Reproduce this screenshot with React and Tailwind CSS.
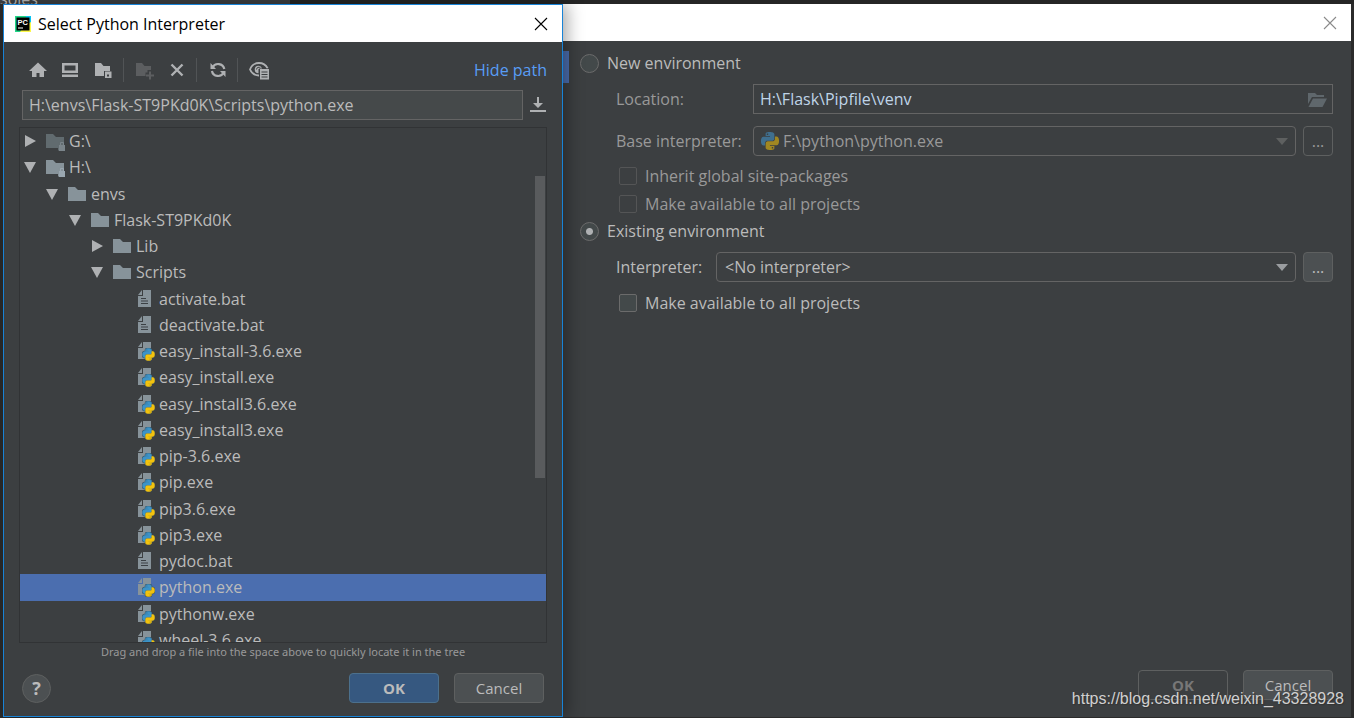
import { useState } from "react";

const files = [
  { name: "G:\\", depth: 0, type: "drive", state: "closed", dim: true },
  { name: "H:\\", depth: 0, type: "drive", state: "open" },
  { name: "envs", depth: 1, type: "folder", state: "open" },
  { name: "Flask-ST9PKd0K", depth: 2, type: "folder", state: "open" },
  { name: "Lib", depth: 3, type: "folder", state: "closed" },
  { name: "Scripts", depth: 3, type: "folder", state: "open" },
  { name: "activate.bat", depth: 4, type: "file" },
  { name: "deactivate.bat", depth: 4, type: "file" },
  { name: "easy_install-3.6.exe", depth: 4, type: "python" },
  { name: "easy_install.exe", depth: 4, type: "python" },
  { name: "easy_install3.6.exe", depth: 4, type: "python" },
  { name: "easy_install3.exe", depth: 4, type: "python" },
  { name: "pip-3.6.exe", depth: 4, type: "python" },
  { name: "pip.exe", depth: 4, type: "python" },
  { name: "pip3.6.exe", depth: 4, type: "python" },
  { name: "pip3.exe", depth: 4, type: "python" },
  { name: "pydoc.bat", depth: 4, type: "file" },
  { name: "python.exe", depth: 4, type: "python" },
  { name: "pythonw.exe", depth: 4, type: "python" },
  { name: "wheel-3.6.exe", depth: 4, type: "python" },
];

const indents = ["pl-1", "pl-[26px]", "pl-[49px]", "pl-[71px]", "pl-[94px]"];

const snake =
  "M14.25.18l.9.2.73.26.59.3.45.32.34.34.25.34.16.33.1.3.04.26.02.2-.01.13V8.5l-.05.63-.13.55-.21.46-.26.38-.3.31-.33.25-.35.19-.35.14-.33.1-.3.07-.26.04-.21.02H8.77l-.69.05-.59.14-.5.22-.41.27-.33.32-.27.35-.2.36-.15.37-.1.35-.07.32-.04.27-.02.21v3.06H3.17l-.21-.03-.28-.07-.32-.12-.35-.18-.36-.26-.36-.36-.35-.46-.32-.59-.28-.73-.21-.88-.14-1.05-.05-1.23.06-1.22.16-1.04.24-.87.32-.71.36-.57.4-.44.42-.33.42-.24.4-.16.36-.1.32-.05.24-.01h.16l.06.01h8.16v-.83H6.18l-.01-2.75-.02-.37.05-.34.11-.31.17-.28.25-.26.31-.23.38-.2.44-.18.51-.15.58-.12.64-.1.71-.06.77-.04.84-.02 1.27.05zm-6.3 1.98l-.23.33-.08.41.08.41.23.34.33.22.41.09.41-.09.33-.22.23-.34.08-.41-.08-.41-.23-.33-.33-.22-.41-.09-.41.09z";

function PythonLogo({ className, blue = "#3d94c8", yellow = "#f3c30e" }) {
  return (
    <svg viewBox="0 0 24 24" className={className}>
      <path d={snake} fill={blue} />
      <path d={snake} fill={yellow} transform="rotate(180 12 12)" />
    </svg>
  );
}

function Arrow({ state }) {
  return (
    <svg viewBox="0 0 12 12" className="size-3 shrink-0" fill="#afb1b3">
      {state === "open" && <path d="M0 1h12L6 12z" />}
      {state === "closed" && <path d="M1 0l11 6L1 12z" />}
    </svg>
  );
}

function FileIcon({ type, dim }) {
  if (type === "drive" || type === "folder") {
    return (
      <svg viewBox="0 0 20 18" className="h-[18px] w-5 shrink-0 overflow-visible">
        <path d="M-1 2h7l3 3h8v11H-1z" fill={dim ? "#616b6f" : "#87939a"} />
        {type === "drive" && (
          <>
            <path d="M11 14v-2.500l1.500-2h3l1.500 2v7h-6z" fill={dim ? "#616b6f" : "#87939a"} />
            <path d="M12 13h6v6h-6z" fill={dim ? "#7b858b" : "#9aa7b0"} />
            <path d="M13.500 13v-2.500h3V13" fill="none" stroke={dim ? "#7b858b" : "#9aa7b0"} />
          </>
        )}
      </svg>
    );
  }
  return (
    <svg viewBox="0 0 18 20" className="h-5 w-[18px] shrink-0">
      <path d="M6 1h8v17H1V7h5z" fill="#87939a" />
      <path d="M1 6l4-5v5z" fill="#87939a" />
      {type === "file" && (
        <path d="M4 9.500h5M4 12h7M4 14.500h7" stroke="#3c4145" strokeWidth="1.200" />
      )}
      {type === "python" && (
        <svg x="5" y="7" width="13" height="13" viewBox="-1 -1 26 26">
          <g stroke="#3c4e5a" strokeWidth="3">
            <path d={snake} />
            <path d={snake} transform="rotate(180 12 12)" />
          </g>
          <path d={snake} fill="#3d94c8" stroke="#3d94c8" />
          <path d={snake} fill="#f3c30e" stroke="#f3c30e" transform="rotate(180 12 12)" />
        </svg>
      )}
    </svg>
  );
}

function CloseIcon({ color }) {
  return (
    <svg viewBox="0 0 14 14" className="size-[14px]">
      <path d="M1 1l12 12M13 1L1 13" stroke={color} strokeWidth="1.100" />
    </svg>
  );
}

function ToolButton({ label, disabled, children }) {
  return (
    <button
      aria-label={label}
      disabled={disabled}
      className="flex h-6 w-8 items-center justify-center text-[#afb1b3] disabled:text-[#5c5e60]"
    >
      <svg viewBox="0 0 20 18" className="h-[18px] w-5 overflow-visible" fill="currentColor">
        {children}
      </svg>
    </button>
  );
}

function Divider() {
  return <div className="mx-1 h-6 w-px bg-[#515456]" />;
}

function Toolbar() {
  return (
    <div className="flex items-center">
      <ToolButton label="Home">
        <path d="M9 1.500L0 10h3v6h4.500v-4h3v4H15v-6h3z" />
      </ToolButton>
      <ToolButton label="Desktop">
        <path fillRule="evenodd" d="M1 2h16v10H1zM3.500 4.500v5h11v-5z" />
        <path d="M1 13.500h16v2.500H1z" />
      </ToolButton>
      <ToolButton label="Project directory">
        <path d="M2 2h6l2.500 3H17v5h-6v5H2z" />
        <path fillRule="evenodd" d="M12 10.500h6.500V17H12zM14 13.500v2h2v-2z" />
      </ToolButton>
      <Divider />
      <ToolButton label="New folder" disabled>
        <path d="M2 2h6l2.500 3H17v4h-3.500v2.500h-2V15H2z" />
        <path d="M15 10.500h2v3h3v2h-3v3h-2v-3h-3v-2h3z" />
      </ToolButton>
      <ToolButton label="Delete">
        <path d="M5.500 3.500l11 11M16.500 3.500l-11 11" stroke="currentColor" strokeWidth="2.400" />
      </ToolButton>
      <Divider />
      <ToolButton label="Refresh">
        <path
          d="M5.500 6.500a6.300 6.300 0 0 1 11.800 1.500M16.700 11.500a6.300 6.300 0 0 1-11.800-1.500"
          fill="none"
          stroke="currentColor"
          strokeWidth="2.200"
        />
        <path d="M3.500 2v6h5.500zM18.500 16v-6H13z" />
      </ToolButton>
      <Divider />
      <ToolButton label="Show hidden files">
        <path
          d="M11 14.500C7 14.500 3.500 12 2 8.500 3.500 4.500 7 2 11 2s7 2.200 8.700 5.500"
          fill="none"
          stroke="currentColor"
          strokeWidth="1.800"
        />
        <path d="M10.500 4.700a3.800 3.800 0 1 0 0 7.600V8H14a3.800 3.800 0 0 0-3.500-3.300z" />
        <path d="M8.500 8.500a2.300 2.300 0 0 1 4-1.500" fill="none" stroke="#3c3f41" />
        <path d="M11 7.500h10v11H11z" fill="#3c3f41" />
        <path fillRule="evenodd" d="M12 8h9v10.500h-9zM13.500 10.500v1h6v-1zM13.500 13v1h6v-1zM13.500 15.500v1h6v-1z" />
      </ToolButton>
    </div>
  );
}

function FileTree() {
  const [selected, setSelected] = useState("python.exe");

  return (
    <div className="relative min-h-0 flex-1 overflow-hidden border border-[#313335]">
      <ul className="grid h-[525px] auto-rows-fr">
        {files.map((f) => (
          <li key={f.name} className={f.name === selected ? "bg-[#4b6eaf]" : ""}>
            <button
              onClick={() => setSelected(f.name)}
              className={`flex h-full w-full items-center text-left ${indents[f.depth]}`}
            >
              <Arrow state={f.state} />
              <span className="flex w-[33px] pl-[11px]">
                <FileIcon type={f.type} dim={f.dim} />
              </span>
              {f.name}
            </button>
          </li>
        ))}
      </ul>
      <div className="absolute top-12 right-px h-[302px] w-[10px] bg-[#595b5d]" />
    </div>
  );
}

function PathDialog() {
  return (
    <section className="z-10 flex w-5/12 max-w-[560px] flex-col border border-[#1883d7] bg-[#3c3f41] shadow-[4px_0_16px_rgba(0,0,0,0.35)]">
      <header className="flex h-[37px] shrink-0 items-center bg-white pr-[14px] pl-[11px] text-black">
        <svg viewBox="0 0 16 16" className="mr-[7px] size-4">
          <path d="M0 0h16v16H0z" fill="#21d789" />
          <path d="M11 0h5v8l-5-2z" fill="#07c3f2" />
          <path d="M16 6v10H5l4-6z" fill="#fcf84a" />
          <path d="M1.500 1.500h13v13h-13z" />
          <text x="2.500" y="8.500" fontSize="7.500" fontWeight="bold" fontFamily="Liberation Sans" fill="#fff">
            PC
          </text>
          <path d="M3 11.500h5v1H3z" fill="#fff" />
        </svg>
        <h1 className="flex-1">Select Python Interpreter</h1>
        <button aria-label="Close">
          <CloseIcon color="#000" />
        </button>
      </header>

      <div className="flex min-h-0 flex-1 flex-col px-[15px] pb-[13px]">
        <div className="mt-4 flex items-center justify-between pl-1">
          <Toolbar />
          <a href="#path" className="text-[#589df6]">
            Hide path
          </a>
        </div>
        <div className="mt-2 mb-[7px] flex items-center gap-[6px] pl-[3px]">
          <input
            aria-label="Path"
            defaultValue="H:\envs\Flask-ST9PKd0K\Scripts\python.exe"
            className="h-[30px] min-w-0 flex-1 border border-[#646464] bg-[#45494a] px-[6px] outline-none"
          />
          <button aria-label="History">
            <svg viewBox="0 0 18 18" className="size-[18px]" fill="#afb1b3">
              <path d="M8 1h2v6h4l-5 5-5-5h4zM1 14h16v2H1z" />
            </svg>
          </button>
        </div>
        <FileTree />
        <p className="mt-px text-center font-['Noto_Sans',sans-serif] text-[11px] leading-4 text-[#999999]">
          Drag and drop a file into the space above to quickly locate it in the tree
        </p>
        <footer className="mt-[13px] flex items-center gap-[15px] px-[3px]">
          <button
            aria-label="Help"
            className="mr-auto flex size-[29px] items-center justify-center rounded-full border border-[#5e6060] bg-[#4c5052] text-[18px] font-bold"
          >
            ?
          </button>
          <button className="h-[30px] w-[90px] rounded border border-[#4c708c] bg-[#365880] text-[15px] font-bold">
            OK
          </button>
          <button className="h-[30px] w-[90px] rounded border border-[#5e6060] bg-[#4c5052] text-[15px]">
            Cancel
          </button>
        </footer>
      </div>
    </section>
  );
}

function Radio({ id, label, checked, onChange }) {
  return (
    <div className="flex h-5 items-center gap-2">
      <input
        type="radio"
        id={id}
        name="environment"
        checked={checked}
        onChange={onChange}
        className="size-[19px] appearance-none rounded-full border border-[#6b6b6b] bg-[#43494a] checked:bg-[radial-gradient(circle,#afb1b3_3px,#43494a_4px)]"
      />
      <label htmlFor={id}>{label}</label>
    </div>
  );
}

function Checkbox({ id, label, disabled }) {
  return (
    <div className="flex h-5 items-center gap-2 pl-[39px]">
      <input
        type="checkbox"
        id={id}
        disabled={disabled}
        className="size-[18px] appearance-none rounded-xs border border-[#6b6b6b] bg-[#43494a] disabled:border-[#545556] disabled:bg-transparent"
      />
      <label htmlFor={id} className={disabled ? "text-[#999999]" : ""}>
        {label}
      </label>
    </div>
  );
}

function DropArrow({ color }) {
  return (
    <svg viewBox="0 0 12 7" className="pointer-events-none absolute top-3 right-2 h-[7px] w-3">
      <path d="M0 0h12L6 7z" fill={color} />
    </svg>
  );
}

function EnvironmentDialog() {
  const [env, setEnv] = useState("existing");

  return (
    <section className="flex flex-1 flex-col bg-[#3c3f41]">
      <header className="flex h-[37px] shrink-0 items-center justify-end bg-white pr-[14px]">
        <button aria-label="Close">
          <CloseIcon color="#8a8a8a" />
        </button>
      </header>
      <div className="flex flex-1 pt-[10px]">
        <div className="h-8 w-[6px] bg-[#4b6eaf]" />
        <form className="flex flex-1 flex-col pt-[2px] pr-[18px] pb-[17px] pl-[11px]">
          <Radio id="new" label="New environment" checked={env === "new"} onChange={() => setEnv("new")} />
          <div className="mt-[11px] flex items-center pl-9">
            <label htmlFor="location" className="w-[137px] text-[#999999]">
              Location:
            </label>
            <div className="relative flex-1">
              <input
                id="location"
                defaultValue="H:\Flask\Pipfile\venv"
                className="block h-[30px] w-full border border-[#646464] bg-transparent px-[6px] text-[#bfd4e8] outline-none"
              />
              <svg viewBox="0 0 20 16" className="absolute top-2 right-[6px] h-4 w-5" fill="#5f676c">
                <path d="M1 1h7l2 2h7v2H5l-4 7z" />
                <path d="M6 6.500h14L15.500 15H1.500z" />
              </svg>
            </div>
          </div>
          <div className="mt-3 flex items-center pl-9">
            <label htmlFor="base" className="w-[137px] text-[#999999]">
              Base interpreter:
            </label>
            <div className="relative flex-1">
              <PythonLogo
                className="absolute top-[6px] left-2 size-[18px]"
                blue="#3f6f8f"
                yellow="#a08722"
              />
              <select
                id="base"
                disabled
                className="block h-[30px] w-full appearance-none rounded border border-[#646464] pl-[29px] text-[#999999] opacity-100"
              >
                <option>F:\python\python.exe</option>
              </select>
              <DropArrow color="#5e6060" />
            </div>
            <button type="button" disabled className="ml-[7px] size-[30px] rounded border border-[#5e6060] text-[#999999]">
              ...
            </button>
          </div>
          <div className="mt-[10px] mb-[7px] flex flex-col gap-2">
            <Checkbox id="inherit" label="Inherit global site-packages" disabled />
            <Checkbox id="share-new" label="Make available to all projects" disabled />
          </div>
          <Radio
            id="existing"
            label="Existing environment"
            checked={env === "existing"}
            onChange={() => setEnv("existing")}
          />
          <div className="my-[11px] flex items-center pl-9">
            <label htmlFor="interpreter" className="w-[100px]">
              Interpreter:
            </label>
            <div className="relative flex-1">
              <select
                id="interpreter"
                className="block h-[30px] w-full appearance-none rounded border border-[#646464] bg-[#3c3f41] pl-2"
              >
                <option>&lt;No interpreter&gt;</option>
              </select>
              <DropArrow color="#9a9da0" />
            </div>
            <button type="button" className="ml-[7px] size-[30px] rounded border border-[#5e6060] bg-[#4c5052]">
              ...
            </button>
          </div>
          <Checkbox id="share-existing" label="Make available to all projects" />
          <footer className="mt-auto flex justify-end gap-[15px]">
            <button
              type="button"
              disabled
              className="h-[30px] w-[90px] rounded border border-[#5e6060] text-[15px] font-bold text-[#777777]"
            >
              OK
            </button>
            <button type="button" className="h-[30px] w-[90px] rounded border border-[#5e6060] bg-[#4c5052] text-[15px]">
              Cancel
            </button>
          </footer>
        </form>
      </div>
    </section>
  );
}

export default function App() {
  return (
    <main className="relative flex h-screen min-h-[600px] flex-col overflow-hidden bg-[#2b2b2b] font-['Open_Sans','Noto_Sans',sans-serif] text-base text-[#bbbbbb]">
      <div className="flex h-1 shrink-0 items-end overflow-hidden bg-[#252525]">
        <div className="w-[290px] bg-[#3c3f41] leading-[10px]">soles</div>
      </div>
      <div className="flex min-h-0 flex-1 pr-[3px] pb-px pl-[3px]">
        <PathDialog />
        <EnvironmentDialog />
      </div>
      <p className="absolute right-[10px] bottom-[9px] font-['Liberation_Sans',sans-serif] text-base leading-5 text-[#d0d0d0] [text-shadow:1px_1px_1px_#333]">
        https://blog.csdn.net/weixin_43328928
      </p>
    </main>
  );
}
